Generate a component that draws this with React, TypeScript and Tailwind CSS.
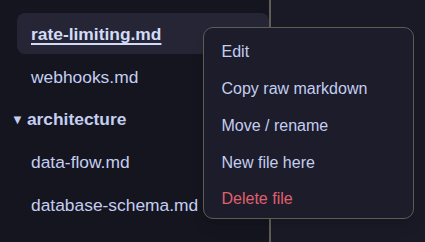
const files = [
  { kind: "file", name: "rate-limiting.md", active: true },
  { kind: "file", name: "webhooks.md" },
  { kind: "dir", name: "architecture" },
  { kind: "file", name: "data-flow.md" },
  { kind: "file", name: "database-schema.md" },
  { kind: "file", name: "security.md" },
];

const menu = ["Edit", "Copy raw markdown", "Move / rename", "New file here"];

export default function App() {
  return (
    <div
      className="relative flex h-[242px] w-[425px] overflow-hidden bg-[#1a1a27] text-[#c4cef0]"
      style={{ fontFamily: '"Liberation Sans", Arial, sans-serif' }}
    >
      <aside className="flex h-full w-[271px] shrink-0 flex-col border-r-2 border-[#615d56] bg-[#151520] pt-[12px]">
        {files.map((f) =>
          f.kind === "dir" ? (
            <div
              key={f.name}
              className="flex h-[42.75px] shrink-0 items-center pl-[11px] pt-[1px] text-[17.4px] font-bold"
            >
              <span className="mr-[3px] text-[13px] leading-none">▼</span>
              {f.name}
            </div>
          ) : (
            <div key={f.name} className="flex h-[42.75px] shrink-0 items-center py-[1px]">
              <div
                className={
                  f.active
                    ? "ml-[17px] flex h-full flex-1 items-center rounded-[8px] bg-[#252535] pl-[14px] pt-[2px] text-[17.4px] font-bold text-[#d3dcf7] underline decoration-[1.5px] underline-offset-[3px]"
                    : "ml-[17px] flex h-full flex-1 items-center pl-[14px] pt-[1px] text-[17.4px]"
                }
              >
                {f.name}
              </div>
            </div>
          ),
        )}
      </aside>
      <main className="flex-1" />

      <div className="absolute left-[203px] top-[27px] w-[211px] rounded-[10px] border-[1.5px] border-[#5f5b55] bg-[#1c1c2b] pb-[0px] pt-[6px] shadow-lg">
        {menu.map((m) => (
          <div key={m} className="flex h-[36.75px] items-center pl-[17.5px] text-[16px]">
            {m}
          </div>
        ))}
        <div className="flex h-[36.75px] items-center pl-[17.5px] text-[16px] text-[#e0606c]">Delete file</div>
      </div>
    </div>
  );
}
